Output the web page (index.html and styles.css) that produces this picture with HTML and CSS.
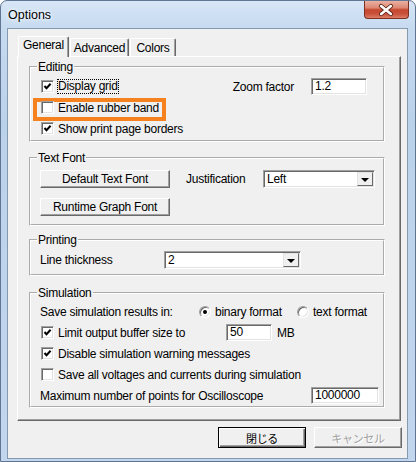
FILE: index.html
```html
<!DOCTYPE html>
<html lang="en">
<head>
  <meta charset="UTF-8" />
  <title>Options</title>
  <link rel="stylesheet" href="styles.css">
</head>
<body>

<div class="window">
  <div class="titlebar">
    <span class="title">Options</span>
    <span class="close">
      <svg width="45" height="18" viewBox="0 0 45 18">
        <path d="M17.5 5 L27.5 13 M27.5 5 L17.5 13" stroke="#5a2418" stroke-width="4.4" stroke-linecap="round"/>
        <path d="M17.5 5 L27.5 13 M27.5 5 L17.5 13" stroke="#fff" stroke-width="2.6" stroke-linecap="round"/>
      </svg>
    </span>
  </div>

  <div class="client">
    <div class="tabs">
      <span class="tab active">General</span>
      <span class="tab tab-adv">Advanced</span>
      <span class="tab tab-col">Colors</span>
    </div>

    <div class="panel">

      <fieldset class="group">
        <legend>Editing</legend>
        <div class="body editing">
          <div class="row">
            <span class="check"><span class="box on"></span><span class="focus">Display grid</span></span>
            <span class="zoom-label">Zoom factor</span>
            <span class="field zoom-field">1.2</span>
          </div>
          <div class="row">
            <span class="check marked"><span class="box"></span>Enable rubber band</span>
          </div>
          <div class="row">
            <span class="check"><span class="box on"></span>Show print page borders</span>
          </div>
        </div>
      </fieldset>

      <fieldset class="group textfont">
        <legend>Text Font</legend>
        <div class="body fonts">
          <div class="row">
            <span class="btn font-btn">Default Text Font</span>
            <span class="just-label">Justification</span>
            <span class="select just-select">Left<span class="drop"></span></span>
          </div>
          <div class="row">
            <span class="btn font-btn">Runtime Graph Font</span>
          </div>
        </div>
      </fieldset>

      <fieldset class="group printing">
        <legend>Printing</legend>
        <div class="body print">
          <div class="row">
            <span class="line-label">Line thickness</span>
            <span class="select line-select">2<span class="drop"></span></span>
          </div>
        </div>
      </fieldset>

      <fieldset class="group simulation">
        <legend>Simulation</legend>
        <div class="body sim">
          <div class="row">
            <span class="save-label">Save simulation results in:</span>
            <span class="radio-item binary"><span class="radio on"></span>binary format</span>
            <span class="radio-item"><span class="radio"></span>text format</span>
          </div>
          <div class="row">
            <span class="check limit"><span class="box on"></span>Limit output buffer size to</span>
            <span class="field buffer-field">50</span>
            <span class="mb">MB</span>
          </div>
          <div class="row">
            <span class="check"><span class="box on"></span>Disable simulation warning messages</span>
          </div>
          <div class="row">
            <span class="check"><span class="box"></span>Save all voltages and currents during simulation</span>
          </div>
          <div class="row">
            <span class="max-label">Maximum number of points for Oscilloscope</span>
            <span class="field max-field">1000000</span>
          </div>
        </div>
      </fieldset>

    </div>

    <div class="actions">
      <span class="btn dlg-btn default">閉じる</span>
      <span class="btn dlg-btn disabled">キャンセル</span>
    </div>
  </div>
</div>

</body>
</html>
```

FILE: styles.css
```css
*, *::before, *::after {
  box-sizing: border-box;
}

body {
  margin: 0;
  background: #fff;
  font-family: "Liberation Sans", Arial, sans-serif;
  font-size: 12px;
  letter-spacing: -0.25px;
  color: #000;
}

/* window frame */

.window {
  width: 416px;
  height: 462px;
  border: 1px solid #5f7591;
  border-radius: 7px 7px 0 0;
  background: linear-gradient(180deg, #d7e6f6 0, #c6daf0 27px, #bbd2eb 120px, #c2d7ee 462px);
  display: flex;
  flex-direction: column;
}

.titlebar {
  height: 27px;
  display: flex;
  align-items: flex-start;
  padding-left: 7px;
}

.title {
  line-height: 28px;
  font-size: 12.5px;
  letter-spacing: 0;
  text-shadow: 0 0 6px #fff, 0 0 3px #fff;
}

.close {
  margin-left: auto;
  margin-right: 6px;
  width: 45px;
  height: 18px;
  border: 1px solid #7d3020;
  border-top: none;
  border-radius: 0 0 4px 4px;
  background: linear-gradient(180deg, #eab1a3 0, #dc8773 40%, #c7472f 52%, #c9503a 75%, #dd7d65 100%);
  display: flex;
}

.close svg {
  margin-left: -1px;
}

.client {
  margin-left: 6px;
  width: 401px;
  height: 431px;
  border: 1px solid #8599b1;
  background: #f0f0f0;
  padding: 7px 5px 0 9px;
}

/* tabs */

.tabs {
  height: 20px;
  display: flex;
  align-items: flex-end;
  padding-left: 1px;
}

.tab {
  height: 18px;
  line-height: 17px;
  text-align: center;
  border: 1px solid;
  border-color: #fff #696969 transparent #fff;
  border-bottom: none;
  border-radius: 2px 2px 0 0;
  box-shadow: inset -1px 0 0 #a0a0a0;
  margin-right: 1px;
}

.tab.active {
  width: 51px;
  height: 21px;
  line-height: 17px;
  margin-bottom: -1px;
  background: #f0f0f0;
  position: relative;
  z-index: 1;
}

.tab-adv {
  width: 59px;
  line-height: 19px;
}

.tab-col {
  width: 46px;
  line-height: 19px;
}

.panel {
  width: 384px;
  height: 365px;
  border: 1px solid;
  border-color: #fff #696969 #696969 #fff;
  box-shadow: inset -1px -1px 0 #a0a0a0;
  padding: 3px 0 0 11px;
}

/* group boxes */

.group {
  width: 356px;
  margin: 0;
  padding: 0;
  border: 2px groove #fff;
}

.group legend {
  margin-left: 6px;
  padding: 0 1px;
  line-height: 14px;
}

.textfont {
  margin-top: 9px;
}

.printing {
  margin-top: 7px;
}

.simulation {
  margin-top: 10px;
}

.row {
  height: 21px;
  display: flex;
  align-items: center;
}

.editing {
  padding: 2px 0 1px 10px;
}

.fonts {
  padding: 5px 0 8px 9px;
}

.fonts .row {
  height: 18px;
}

.fonts .row + .row {
  margin-top: 10px;
}

.print {
  padding: 4px 0 5px 9px;
}

.print .row {
  height: 18px;
}

.sim {
  padding: 1px 0 0 10px;
}

/* controls */

.check {
  display: flex;
  align-items: center;
  gap: 4px;
  position: relative;
}

.box {
  width: 13px;
  height: 13px;
  background: #fff;
  border: 1px solid;
  border-color: #a0a0a0 #fff #fff #a0a0a0;
  box-shadow: inset 1px 1px 0 #696969, inset -1px -1px 0 #e3e3e3;
  flex: none;
}

.box.on {
  background: #fff url("data:image/svg+xml,%3Csvg xmlns='http://www.w3.org/2000/svg' width='11' height='11'%3E%3Cpath d='M2.5 5 L4.5 7.2 L8.6 2.8' fill='none' stroke='%23000' stroke-width='2'/%3E%3C/svg%3E") 0 0 no-repeat;
}

.focus {
  outline: 1px dotted #000;
  outline-offset: 0;
  line-height: 13px;
}

.marked .box {
  position: relative;
  z-index: 1;
}

.marked::after {
  content: "";
  position: absolute;
  left: -8px;
  top: -3px;
  width: 133px;
  height: 23px;
  border: 4px solid #f5821f;
}

.zoom-label {
  margin-left: auto;
}

.field {
  height: 17px;
  line-height: 15px;
  background: #fff;
  border: 1px solid;
  border-color: #a0a0a0 #fff #fff #a0a0a0;
  box-shadow: inset 1px 1px 0 #696969, inset -1px -1px 0 #e3e3e3;
  padding-left: 3px;
}

.zoom-field {
  width: 56px;
  margin: 0 16px 0 17px;
}

.btn {
  display: flex;
  align-items: center;
  justify-content: center;
  background: #f0f0f0;
  border: 1px solid;
  border-color: #fff #696969 #696969 #fff;
  box-shadow: inset -1px -1px 0 #a0a0a0;
}

.font-btn {
  width: 130px;
  height: 18px;
}

.just-label {
  margin-left: 16px;
}

.select {
  height: 18px;
  line-height: 16px;
  background: #fff;
  border: 1px solid;
  border-color: #a0a0a0 #fff #fff #a0a0a0;
  box-shadow: inset 1px 1px 0 #696969, inset -1px -1px 0 #e3e3e3;
  padding-left: 3px;
  display: flex;
  justify-content: space-between;
}

.drop {
  width: 16px;
  height: 14px;
  margin: 1px 1px 0 0;
  background: #f0f0f0;
  border: 1px solid;
  border-color: #e3e3e3 #696969 #696969 #e3e3e3;
  display: flex;
  align-items: center;
  justify-content: center;
}

.drop::before {
  content: "";
  border-left: 4px solid transparent;
  border-right: 4px solid transparent;
  border-top: 4px solid #000;
  margin-top: 1px;
}

.just-select {
  width: 112px;
  margin-left: auto;
  margin-right: 8px;
}

.line-label {
  width: 124px;
}

.line-select {
  width: 137px;
}

.save-label {
  width: 159px;
  margin-left: -1px;
}

.radio-item {
  display: flex;
  align-items: center;
  gap: 4px;
}

.binary {
  width: 98px;
}

.radio {
  width: 12px;
  height: 12px;
  border-radius: 50%;
  background: #fff;
  border: 1px solid;
  border-color: #a0a0a0 #fff #fff #a0a0a0;
  box-shadow: inset 1px 1px 0 #696969, inset -1px -1px 0 #e3e3e3;
  display: flex;
  align-items: center;
  justify-content: center;
}

.radio.on::before {
  content: "";
  width: 4px;
  height: 4px;
  border-radius: 50%;
  background: #000;
}

.limit {
  width: 185px;
}

.buffer-field {
  width: 46px;
}

.mb {
  margin-left: 5px;
}

.max-label {
  width: 271px;
  margin-left: -1px;
}

.max-field {
  width: 68px;
}

/* dialog buttons */

.actions {
  display: flex;
  justify-content: flex-end;
  gap: 8px;
  margin-top: 6px;
}

.dlg-btn {
  width: 88px;
  height: 21px;
  font-family: "Noto Sans CJK JP", sans-serif;
  font-size: 11px;
  letter-spacing: -0.3px;
}

.default {
  border: 1px solid #000;
  box-shadow: inset 1px 1px 0 #fff, inset -1px -1px 0 #696969, inset -2px -2px 0 #a0a0a0;
}

.disabled {
  color: #a0a0a0;
  text-shadow: 1px 1px 0 #fff;
}
```
